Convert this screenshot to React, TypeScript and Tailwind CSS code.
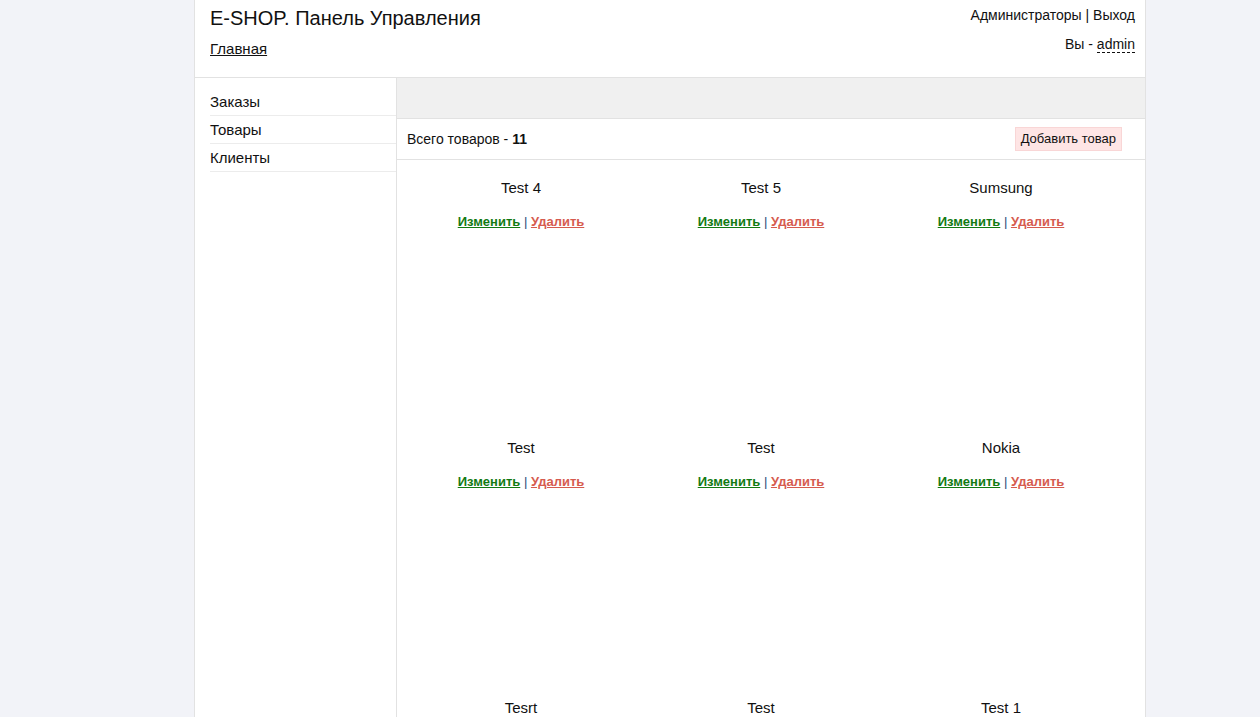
import React from "react";

interface Product {
  id: number;
  title: string;
}

const products: Product[] = [
  { id: 1, title: "Test 4" },
  { id: 2, title: "Test 5" },
  { id: 3, title: "Sumsung" },
  { id: 4, title: "Test" },
  { id: 5, title: "Test" },
  { id: 6, title: "Nokia" },
  { id: 7, title: "Tesrt" },
  { id: 8, title: "Test" },
  { id: 9, title: "Test 1" },
];

const menu = ["Заказы", "Товары", "Клиенты"];

const App: React.FC = () => {
  return (
    <div
      className="min-h-[717px] bg-[#f2f3f8] text-[14px] text-[#111]"
      style={{ fontFamily: '"Liberation Sans", Arial, sans-serif' }}
    >
      <div className="ml-[194px] w-[952px] min-h-[717px] bg-white border-x border-[#e2e2e2]">
        {/* Header */}
        <div className="flex justify-between h-[78px] border-b border-[#e2e2e2]">
          <div className="pl-[15px] pt-[5px]">
            <h1 className="text-[20px] leading-[26px]">E-SHOP. Панель Управления</h1>
            <a href="#" className="block mt-[8px] text-[15px] underline leading-[20px]">
              Главная
            </a>
          </div>
          <div className="pr-[10px] pt-[5px] text-right">
            <div className="leading-[20px]">
              <a href="#">Администраторы</a> | <a href="#">Выход</a>
            </div>
            <div className="mt-[9px] leading-[20px]">
              Вы -{" "}
              <span className="border-b border-dashed border-[#111]">admin</span>
            </div>
          </div>
        </div>

        <div className="flex">
          {/* Sidebar */}
          <div className="w-[202px] shrink-0 border-r border-[#e2e2e2] pt-[10px] pl-[15px] min-h-[639px] text-[15px]">
            {menu.map((m) => (
              <a
                key={m}
                href="#"
                className="block h-[28px] leading-[28px] border-b border-[#ececec]"
              >
                {m}
              </a>
            ))}
          </div>

          {/* Main */}
          <div className="flex-1">
            <div className="h-[41px] bg-[#f0f0f0] border-b border-[#e2e2e2]" />
            <div className="flex items-center justify-between h-[41px] border-b border-[#e2e2e2] pl-[10px] pr-[23px]">
              <div>
                Всего товаров - <b>11</b>
              </div>
              <button className="h-[24px] px-[5px] bg-[#fee5e5] border border-[#f9d6d6] text-[13px] text-[#111]">
                Добавить товар
              </button>
            </div>

            <div className="grid grid-cols-3 w-[720px] ml-[4px]">
              {products.map((p) => (
                <div key={p.id} className="h-[260px] pt-[18px] text-center">
                  <div className="text-[15px] leading-[20px]">{p.title}</div>
                  <div className="mt-[14px] text-[13px] leading-[20px]">
                    <a href="#" className="font-bold underline text-[#127a12]">
                      Изменить
                    </a>{" "}
                    <span className="text-[#1f4e79]">|</span>{" "}
                    <a href="#" className="font-bold underline text-[#d65b4f]">
                      Удалить
                    </a>
                  </div>
                </div>
              ))}
            </div>
          </div>
        </div>
      </div>
    </div>
  );
};

export default App;
